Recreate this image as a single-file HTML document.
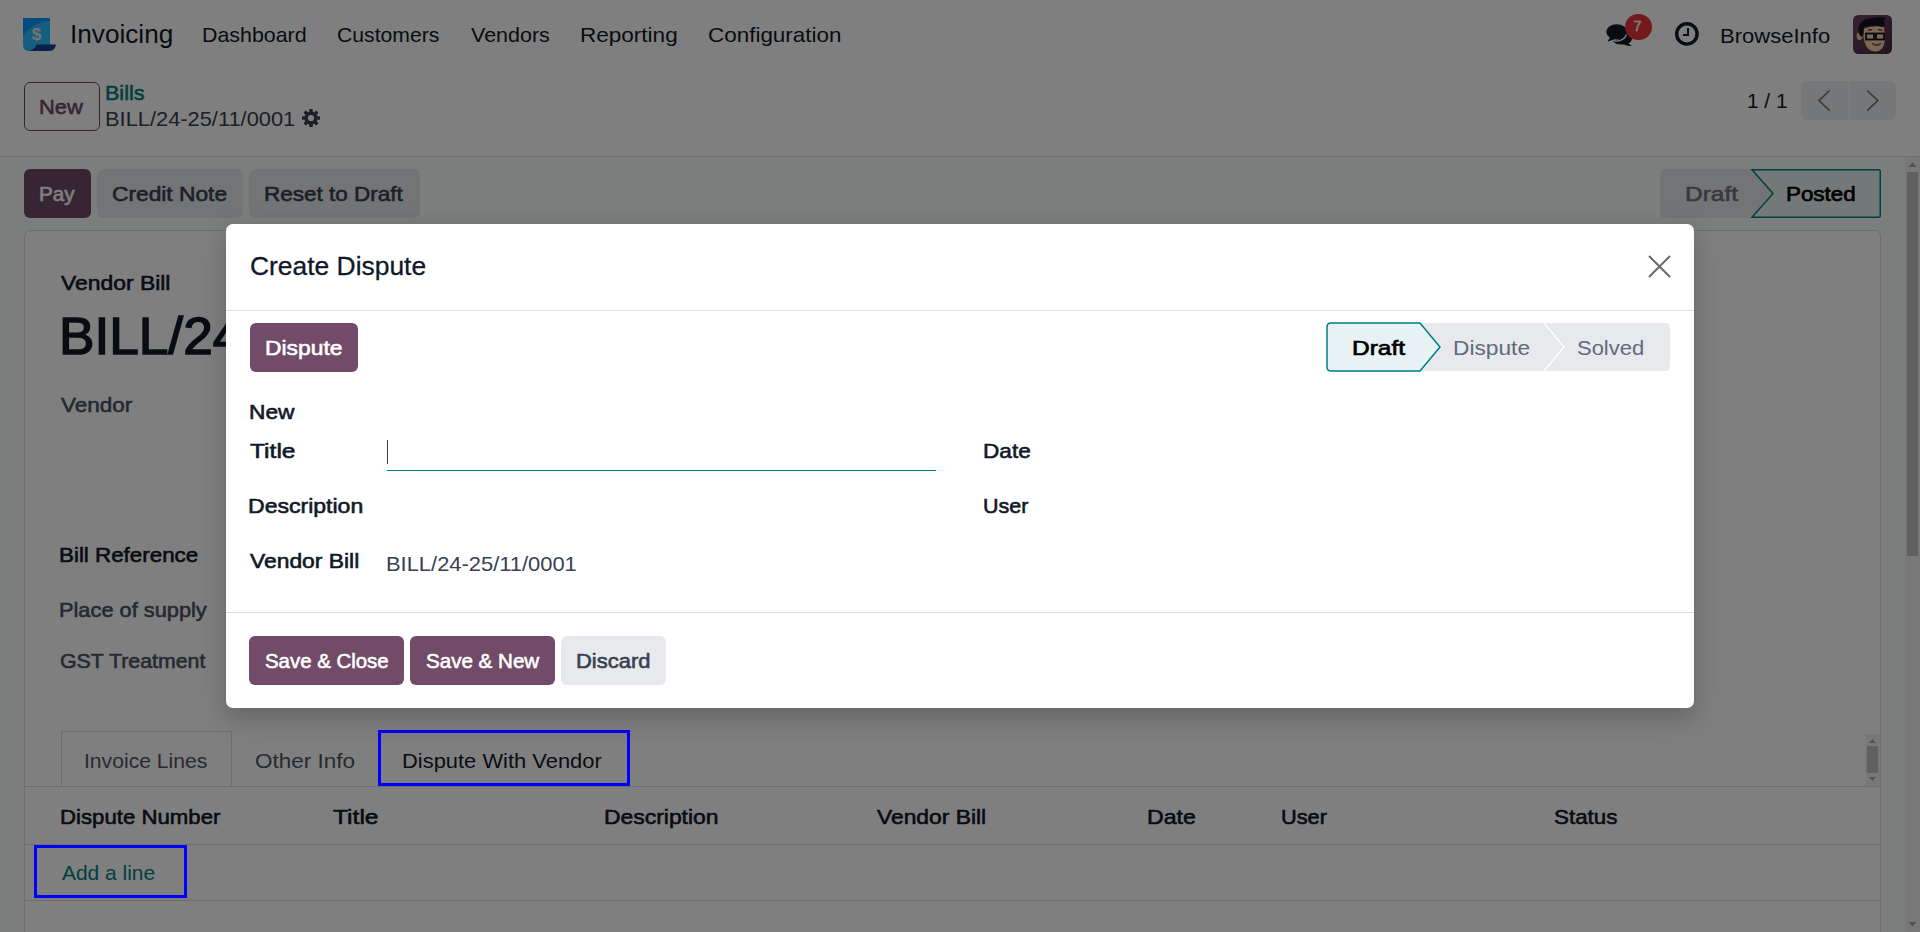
<!DOCTYPE html>
<html><head><meta charset="utf-8">
<style>
html,body{margin:0;padding:0;width:1920px;height:932px;overflow:hidden;background:#f9fafb;font-family:"Liberation Sans",sans-serif;}
.a{position:absolute;box-sizing:border-box;}
.t{position:absolute;white-space:nowrap;line-height:1;transform-origin:0 0;font-family:"Liberation Sans",sans-serif;}
#bg{position:absolute;left:0;top:0;width:1920px;height:932px;overflow:hidden;}
#ov{position:absolute;left:0;top:0;width:1920px;height:932px;background:rgba(0,0,0,0.5);}
#modal{position:absolute;left:226px;top:224px;width:1468px;height:484px;background:#fff;border-radius:7px;box-shadow:0 10px 28px rgba(0,0,0,0.22);}
#modal .t, #modal .a{}
</style></head><body>
<div id="bg">
  <!-- navbar -->
  <div class="a" style="left:0;top:0;width:1920px;height:156px;background:#fff;"></div>
  <div class="a" style="left:0;top:156px;width:1920px;height:1px;background:#d8dadd;"></div>
  <!-- logo -->
  <svg class="a" style="left:23px;top:18px" width="34" height="34" viewBox="0 0 34 34">
    <path d="M0 0 H25 Q27 0 27 2 V33 H6 Q0 33 0 27 Z" fill="#2abcfc"/>
    <path d="M0 0 H25 Q27 0 27 2 V3 Q10 4 0 17.5 Z" fill="#0894ff"/>
    <path d="M13.5 26.6 H33 Q32 33 27 33 H6.5 Q12 31.5 13.5 26.6 Z" fill="#143e94"/>
    <text x="13.4" y="22" font-family="Liberation Sans" font-weight="bold" font-size="17" fill="#e8e8ec" text-anchor="middle">$</text>
  </svg>
  <!-- chat icon -->
  <svg class="a" style="left:1600px;top:18px" width="40" height="32" viewBox="0 0 40 32">
    <path d="M22.5 12 Q31 12.5 32 19 Q32.5 23 28.5 25.5 L32 28 Q27 28 24 26.5 Q15 27 13 23 Q22 22 23 15 Z" fill="#111827"/>
    <ellipse cx="16.8" cy="13.8" rx="10.5" ry="7.6" fill="#111827"/>
    <path d="M10 19.5 L7.5 23.8 L15 21 Z" fill="#111827"/>
    <path d="M14 23.2 Q24 23.5 26.5 16.5" stroke="#ffffff" stroke-width="1.3" fill="none"/>
  </svg>
  <div class="a" style="left:1625px;top:14px;width:26.5px;height:26px;border-radius:50%;background:#e6343f;"></div>
  <div class="t" style="left:1633.5px;top:18.5px;font-size:14.5px;color:#fff;-webkit-text-stroke:0.4px #fff">7</div>
  <!-- clock -->
  <svg class="a" style="left:1673px;top:20px" width="28" height="28" viewBox="0 0 28 28">
    <circle cx="13.9" cy="13.9" r="10.2" stroke="#111827" stroke-width="3.4" fill="none"/>
    <path d="M15 8 V15 H10" stroke="#111827" stroke-width="2" fill="none"/>
  </svg>
  <!-- avatar -->
  <svg class="a" style="left:1853px;top:15px" width="39" height="39" viewBox="0 0 39 39">
    <defs><linearGradient id="avg" x1="0" y1="0" x2="1" y2="1"><stop offset="0" stop-color="#6e4466"/><stop offset="1" stop-color="#4a2840"/></linearGradient></defs>
    <rect x="0" y="0" width="39" height="39" rx="5.5" fill="url(#avg)"/>
    <ellipse cx="6.6" cy="21" rx="3" ry="4" fill="#f3c59c"/>
    <path d="M10 14 Q10 36 22 36.5 Q32 36 32 22 L31 12 Q20 10 10 14 Z" fill="#f7cfa8"/>
    <path d="M5.5 18 Q4 6 16 3.5 Q27 1.5 33 3 L31 6 Q33 10 30 12 Q22 9 11 12 L10.5 20 L8 22 Z" fill="#141018"/>
    <rect x="13" y="18.5" width="8" height="6" stroke="#141018" stroke-width="1.8" fill="#f0d0b0"/>
    <rect x="23" y="18.5" width="8" height="6" stroke="#141018" stroke-width="1.8" fill="#f0d0b0"/>
    <path d="M21 20.5 H23" stroke="#141018" stroke-width="1.5"/>
    <path d="M15 15.5 Q17 14 19 15 M25 15 Q27 14 29 15.5" stroke="#3a2a2a" stroke-width="1.2" fill="none"/>
    <path d="M19 28.5 Q23.5 31 28 28.5 Q24 33 19 28.5 Z" fill="#ffffff" stroke="#5a2a2a" stroke-width="0.8"/>
  </svg>
  <!-- New button -->
  <div class="a" style="left:24px;top:82px;width:76px;height:49px;border:1px solid #714b67;border-radius:6px;"></div>
  <!-- gear -->
  <svg class="a" style="left:301px;top:108.3px" width="20" height="20" viewBox="0 0 20 20">
    <g fill="#374151">
      <circle cx="10" cy="10" r="6.6"/>
      <rect x="8.25" y="1" width="3.5" height="18" rx="0.6"/>
      <rect x="8.25" y="1" width="3.5" height="18" rx="0.6" transform="rotate(45 10 10)"/>
      <rect x="8.25" y="1" width="3.5" height="18" rx="0.6" transform="rotate(90 10 10)"/>
      <rect x="8.25" y="1" width="3.5" height="18" rx="0.6" transform="rotate(135 10 10)"/>
    </g>
    <circle cx="10" cy="10" r="3.1" fill="#fff"/>
  </svg>
  <!-- pager -->
  <div class="a" style="left:1801px;top:81px;width:95px;height:39px;background:#eceef1;border-radius:6px;"></div>
  <div class="a" style="left:1848px;top:81px;width:1px;height:39px;background:#f8f9fa;"></div>
  <svg class="a" style="left:1801px;top:81px" width="95" height="39" viewBox="0 0 95 39">
    <path d="M28.6 9.5 L18 19.6 L28.6 29.6" stroke="#777" stroke-width="1.7" fill="none"/>
    <path d="M66.2 9.5 L76.8 19.6 L66.2 29.6" stroke="#777" stroke-width="1.7" fill="none"/>
  </svg>
  <!-- action buttons -->
  <div class="a" style="left:24px;top:169px;width:67px;height:49px;background:#714b67;border-radius:6px;"></div>
  <div class="a" style="left:97px;top:169px;width:146px;height:49px;background:#e7e9ed;border-radius:6px;"></div>
  <div class="a" style="left:249px;top:169px;width:171px;height:49px;background:#e7e9ed;border-radius:6px;"></div>
  <!-- status bar page -->
  <svg class="a" style="left:1660px;top:169px" width="222" height="50" viewBox="0 0 222 50">
    <path d="M5 0 H92 L113 24.5 L92 49 H5 Q0 49 0 44 V5 Q0 0 5 0 Z" fill="#e7e9ed"/>
    <path d="M92 0.75 H218.5 Q220.25 0.75 220.25 2.5 V46.5 Q220.25 48.25 218.5 48.25 H92 L113 24.5 Z" fill="#e6f2f3" stroke="#017e84" stroke-width="1.5"/>
  </svg>
  <!-- sheet -->
  <div class="a" style="left:24px;top:230px;width:1857px;height:760px;background:#fff;border:1px solid #d8dadd;border-radius:6px;"></div>
  <!-- tabs -->
  <div class="a" style="left:25px;top:786px;width:1855px;height:1px;background:#d8dadd;"></div>
  <div class="a" style="left:61px;top:731px;width:171px;height:56px;border:1px solid #d8dadd;border-bottom:none;"></div>
  <!-- tabs scrollbar -->
  <div class="a" style="left:1865px;top:734px;width:15px;height:52px;background:#f1f1f1;"></div>
  <div class="a" style="left:1867px;top:746px;width:11px;height:27px;background:#c1c1c1;"></div>
  <svg class="a" style="left:1865px;top:734px" width="15" height="52" viewBox="0 0 15 52">
    <path d="M4 9 L7.5 5 L11 9 Z" fill="#a3a3a3"/><path d="M4 43 L7.5 47 L11 43 Z" fill="#a3a3a3"/>
  </svg>
  <!-- table lines -->
  <div class="a" style="left:25px;top:844px;width:1855px;height:1px;background:#d8dadd;"></div>
  <div class="a" style="left:25px;top:900px;width:1855px;height:1px;background:#d8dadd;"></div>
  <!-- page scrollbar -->
  <div class="a" style="left:1905px;top:157px;width:15px;height:775px;background:#f1f1f1;"></div>
  <div class="a" style="left:1907px;top:172px;width:11px;height:384px;background:#c1c1c1;"></div>
  <svg class="a" style="left:1905px;top:157px" width="15" height="775" viewBox="0 0 15 775">
    <path d="M3.5 10 L7.5 5.5 L11.5 10 Z" fill="#a3a3a3"/><path d="M3.5 765 L7.5 769.5 L11.5 765 Z" fill="#a3a3a3"/>
  </svg>
<div class="t" style="left:69.65px;top:20.89px;font-size:26px;font-weight:400;color:#111827;transform:scaleX(1.0062)">Invoicing</div>
<div class="t" style="left:201.79px;top:24.22px;font-size:21px;font-weight:400;color:#111827;transform:scaleX(1.0183)">Dashboard</div>
<div class="t" style="left:336.94px;top:24.22px;font-size:21px;font-weight:400;color:#111827;transform:scaleX(1.0076)">Customers</div>
<div class="t" style="left:471.00px;top:24.22px;font-size:21px;font-weight:400;color:#111827;transform:scaleX(1.0220)">Vendors</div>
<div class="t" style="left:579.70px;top:24.22px;font-size:21px;font-weight:400;color:#111827;transform:scaleX(1.0728)">Reporting</div>
<div class="t" style="left:707.88px;top:24.22px;font-size:21px;font-weight:400;color:#111827;transform:scaleX(1.0687)">Configuration</div>
<div class="t" style="left:1720.24px;top:24.72px;font-size:21px;font-weight:400;color:#111827;transform:scaleX(1.0487)">BrowseInfo</div>
<div class="t" style="left:38.99px;top:96.22px;font-size:21px;font-weight:400;-webkit-text-stroke:0.60px #714b67;color:#714b67;transform:scaleX(1.0461)">New</div>
<div class="t" style="left:105.28px;top:81.72px;font-size:21px;font-weight:400;-webkit-text-stroke:0.60px #017e84;color:#017e84;transform:scaleX(1.0253)">Bills</div>
<div class="t" style="left:105.25px;top:107.97px;font-size:21px;font-weight:400;color:#374151;transform:scaleX(1.0400)">BILL/24-25/11/0001</div>
<div class="t" style="left:1747.44px;top:90.22px;font-size:21px;font-weight:400;color:#111827;transform:scaleX(0.9917)">1 / 1</div>
<div class="t" style="left:38.84px;top:183.22px;font-size:21px;font-weight:400;-webkit-text-stroke:0.60px #ffffff;color:#ffffff;transform:scaleX(0.9853)">Pay</div>
<div class="t" style="left:111.86px;top:183.22px;font-size:21px;font-weight:400;-webkit-text-stroke:0.60px #374151;color:#374151;transform:scaleX(1.0835)">Credit Note</div>
<div class="t" style="left:264.20px;top:183.22px;font-size:21px;font-weight:400;-webkit-text-stroke:0.60px #374151;color:#374151;transform:scaleX(1.0719)">Reset to Draft</div>
<div class="t" style="left:1685.04px;top:183.22px;font-size:21px;font-weight:400;-webkit-text-stroke:0.60px #6b7280;color:#6b7280;transform:scaleX(1.1653)">Draft</div>
<div class="t" style="left:1785.71px;top:183.22px;font-size:21px;font-weight:400;-webkit-text-stroke:0.70px #000000;color:#000000;transform:scaleX(1.0655)">Posted</div>
<div class="t" style="left:61.00px;top:271.72px;font-size:21px;font-weight:400;-webkit-text-stroke:0.60px #111827;color:#111827;transform:scaleX(1.0899)">Vendor Bill</div>
<div class="t" style="left:58.75px;top:309.56px;font-size:52.5px;font-weight:400;-webkit-text-stroke:1.51px #111827;color:#111827;transform:scaleX(1.0127)">BILL/24-25/11/0001</div>
<div class="t" style="left:61.00px;top:394.22px;font-size:21px;font-weight:400;-webkit-text-stroke:0.60px #4b5563;color:#4b5563;transform:scaleX(1.0711)">Vendor</div>
<div class="t" style="left:59.21px;top:544.22px;font-size:21px;font-weight:400;-webkit-text-stroke:0.60px #111827;color:#111827;transform:scaleX(1.0649)">Bill Reference</div>
<div class="t" style="left:59.26px;top:598.82px;font-size:21px;font-weight:400;-webkit-text-stroke:0.60px #4b5563;color:#4b5563;transform:scaleX(1.0374)">Place of supply</div>
<div class="t" style="left:59.93px;top:650.22px;font-size:21px;font-weight:400;-webkit-text-stroke:0.60px #4b5563;color:#4b5563;transform:scaleX(1.0153)">GST Treatment</div>
<div class="t" style="left:84.10px;top:749.92px;font-size:21px;font-weight:400;color:#4b5563;transform:scaleX(1.0063)">Invoice Lines</div>
<div class="t" style="left:254.99px;top:749.92px;font-size:21px;font-weight:400;color:#4b5563;transform:scaleX(1.0702)">Other Info</div>
<div class="t" style="left:402.25px;top:749.92px;font-size:21px;font-weight:400;color:#111827;transform:scaleX(1.0434)">Dispute With Vendor</div>
<div class="t" style="left:59.92px;top:805.52px;font-size:21px;font-weight:400;-webkit-text-stroke:0.60px #111827;color:#111827;transform:scaleX(1.0569)">Dispute Number</div>
<div class="t" style="left:332.51px;top:805.52px;font-size:21px;font-weight:400;-webkit-text-stroke:0.60px #111827;color:#111827;transform:scaleX(1.1699)">Title</div>
<div class="t" style="left:603.87px;top:805.52px;font-size:21px;font-weight:400;-webkit-text-stroke:0.60px #111827;color:#111827;transform:scaleX(1.0904)">Description</div>
<div class="t" style="left:877.30px;top:805.52px;font-size:21px;font-weight:400;-webkit-text-stroke:0.60px #111827;color:#111827;transform:scaleX(1.0869)">Vendor Bill</div>
<div class="t" style="left:1147.15px;top:805.52px;font-size:21px;font-weight:400;-webkit-text-stroke:0.60px #111827;color:#111827;transform:scaleX(1.1001)">Date</div>
<div class="t" style="left:1281.37px;top:805.52px;font-size:21px;font-weight:400;-webkit-text-stroke:0.60px #111827;color:#111827;transform:scaleX(1.0355)">User</div>
<div class="t" style="left:1553.99px;top:805.52px;font-size:21px;font-weight:400;-webkit-text-stroke:0.60px #111827;color:#111827;transform:scaleX(1.0665)">Status</div>
<div class="t" style="left:61.70px;top:862.22px;font-size:21px;font-weight:400;color:#017e84;transform:scaleX(0.9974)">Add a line</div>
</div>
<div id="ov"></div>
<!-- annotation boxes -->
<div class="a" style="left:378px;top:730px;width:252px;height:56px;border:3px solid #0000ff;"></div>
<div class="a" style="left:34px;top:845px;width:153px;height:53px;border:3px solid #0000ff;"></div>

<div id="modal"></div>
<div id="mc" style="position:absolute;left:0;top:0;width:1920px;height:932px;">
  <div class="a" style="left:226px;top:310px;width:1468px;height:1px;background:#dee2e6;"></div>
  <div class="a" style="left:226px;top:612px;width:1468px;height:1px;background:#dee2e6;"></div>
  <svg class="a" style="left:1645px;top:252px" width="29" height="29" viewBox="0 0 29 29">
    <path d="M4 4 L25 25 M25 4 L4 25" stroke="#666a70" stroke-width="2"/>
  </svg>
  <div class="a" style="left:250px;top:323px;width:108px;height:49px;background:#714b67;border-radius:6px;"></div>
  <!-- modal status bar -->
  <svg class="a" style="left:1326px;top:322px" width="345" height="51" viewBox="0 0 345 51">
    <path d="M1 1 H339 Q344 1 344 6 V44 Q344 49 339 49 H1 Z" fill="#e7e9ed"/>
    <path d="M218 1 L238 25 L218 49" stroke="#fff" stroke-width="1.5" fill="none"/>
    <path d="M5 1 H94 L114 25 L94 49 H5 Q1 49 1 45 V5 Q1 1 5 1 Z" fill="#e6f2f3" stroke="#017e84" stroke-width="1.5"/>
  </svg>
  <!-- title input -->
  <div class="a" style="left:387px;top:470px;width:549px;height:1px;background:#017e84;"></div>
  <div class="a" style="left:387px;top:440px;width:1.2px;height:24px;background:#374151;"></div>
  <!-- footer buttons -->
  <div class="a" style="left:249px;top:636px;width:155px;height:49px;background:#714b67;border-radius:6px;"></div>
  <div class="a" style="left:410px;top:636px;width:145px;height:49px;background:#714b67;border-radius:6px;"></div>
  <div class="a" style="left:561px;top:636px;width:105px;height:49px;background:#e7e9ed;border-radius:6px;"></div>
<div class="t" style="left:249.58px;top:253.08px;font-size:26.25px;font-weight:400;-webkit-text-stroke:0.30px #111827;color:#111827;transform:scaleX(1.0058)">Create Dispute</div>
<div class="t" style="left:264.77px;top:337.22px;font-size:21px;font-weight:400;-webkit-text-stroke:0.60px #ffffff;color:#ffffff;transform:scaleX(1.0880)">Dispute</div>
<div class="t" style="left:1351.64px;top:336.72px;font-size:21px;font-weight:400;-webkit-text-stroke:0.70px #000000;color:#000000;transform:scaleX(1.1653)">Draft</div>
<div class="t" style="left:1452.88px;top:336.72px;font-size:21px;font-weight:400;color:#5f6b7d;transform:scaleX(1.0822)">Dispute</div>
<div class="t" style="left:1577.01px;top:336.72px;font-size:21px;font-weight:400;color:#5f6b7d;transform:scaleX(1.0455)">Solved</div>
<div class="t" style="left:249.08px;top:401.22px;font-size:21px;font-weight:400;-webkit-text-stroke:0.60px #111827;color:#111827;transform:scaleX(1.0820)">New</div>
<div class="t" style="left:249.51px;top:440.22px;font-size:21px;font-weight:400;-webkit-text-stroke:0.60px #111827;color:#111827;transform:scaleX(1.1699)">Title</div>
<div class="t" style="left:982.79px;top:440.22px;font-size:21px;font-weight:400;-webkit-text-stroke:0.60px #111827;color:#111827;transform:scaleX(1.0762)">Date</div>
<div class="t" style="left:248.16px;top:495.22px;font-size:21px;font-weight:400;-webkit-text-stroke:0.60px #111827;color:#111827;transform:scaleX(1.0972)">Description</div>
<div class="t" style="left:982.99px;top:495.22px;font-size:21px;font-weight:400;-webkit-text-stroke:0.60px #111827;color:#111827;transform:scaleX(1.0214)">User</div>
<div class="t" style="left:250.00px;top:550.22px;font-size:21px;font-weight:400;-webkit-text-stroke:0.60px #111827;color:#111827;transform:scaleX(1.0879)">Vendor Bill</div>
<div class="t" style="left:385.65px;top:552.82px;font-size:21px;font-weight:400;color:#374151;transform:scaleX(1.0428)">BILL/24-25/11/0001</div>
<div class="t" style="left:264.68px;top:650.42px;font-size:21px;font-weight:400;-webkit-text-stroke:0.60px #ffffff;color:#ffffff;transform:scaleX(0.9711)">Save &amp; Close</div>
<div class="t" style="left:425.57px;top:650.42px;font-size:21px;font-weight:400;-webkit-text-stroke:0.60px #ffffff;color:#ffffff;transform:scaleX(0.9794)">Save &amp; New</div>
<div class="t" style="left:576.24px;top:650.42px;font-size:21px;font-weight:400;-webkit-text-stroke:0.60px #374151;color:#374151;transform:scaleX(1.0452)">Discard</div>
</div>
</body></html>
